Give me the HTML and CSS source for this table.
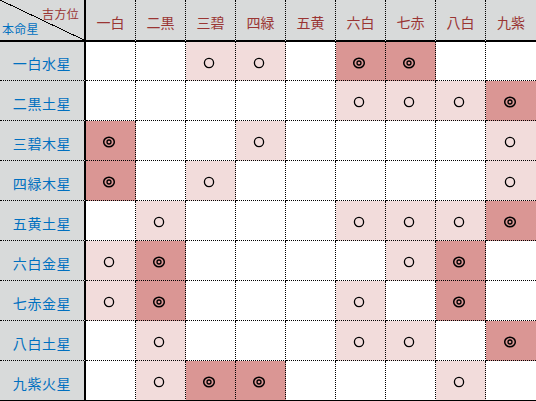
FILE: index.html
```html
<!DOCTYPE html>
<html lang="ja">
<head>
<meta charset="utf-8">
<title>吉方位表</title>
<link rel="stylesheet" href="styles.css">
</head>
<body>
<svg width="0" height="0" class="defs">
  <defs>
    <symbol id="maru" viewBox="0 0 14 14">
      <ellipse cx="7" cy="7" rx="4.6" ry="4.7" fill="none" stroke="#000" stroke-width="1.3"/>
    </symbol>
    <symbol id="nijumaru" viewBox="0 0 14 14">
      <ellipse cx="7" cy="7" rx="5.3" ry="4.7" fill="none" stroke="#000" stroke-width="1.5"/>
      <ellipse cx="7" cy="7" rx="2" ry="2" fill="none" stroke="#000" stroke-width="1.3"/>
    </symbol>
  </defs>
</svg>
<div class="grid">
  <div class="corner">
    <svg class="diag" viewBox="0 0 84 40" preserveAspectRatio="none"><line x1="0" y1="0" x2="84" y2="40" stroke="#000" stroke-width="1" shape-rendering="crispEdges"/></svg>
    <span class="corner-top">吉方位</span>
    <span class="corner-bottom">本命星</span>
  </div>
  <div class="col-head">一白</div>
  <div class="col-head">二黒</div>
  <div class="col-head">三碧</div>
  <div class="col-head">四緑</div>
  <div class="col-head">五黄</div>
  <div class="col-head">六白</div>
  <div class="col-head">七赤</div>
  <div class="col-head">八白</div>
  <div class="col-head end">九紫</div>

  <div class="row-head">一白水星</div>
  <div class="cell"></div>
  <div class="cell"></div>
  <div class="cell light"><svg class="mark"><use href="#maru"/></svg></div>
  <div class="cell light"><svg class="mark"><use href="#maru"/></svg></div>
  <div class="cell"></div>
  <div class="cell dark"><svg class="mark"><use href="#nijumaru"/></svg></div>
  <div class="cell dark"><svg class="mark"><use href="#nijumaru"/></svg></div>
  <div class="cell"></div>
  <div class="cell end"></div>

  <div class="row-head">二黒土星</div>
  <div class="cell"></div>
  <div class="cell"></div>
  <div class="cell"></div>
  <div class="cell"></div>
  <div class="cell"></div>
  <div class="cell light"><svg class="mark"><use href="#maru"/></svg></div>
  <div class="cell light"><svg class="mark"><use href="#maru"/></svg></div>
  <div class="cell light"><svg class="mark"><use href="#maru"/></svg></div>
  <div class="cell dark end"><svg class="mark"><use href="#nijumaru"/></svg></div>

  <div class="row-head">三碧木星</div>
  <div class="cell dark"><svg class="mark"><use href="#nijumaru"/></svg></div>
  <div class="cell"></div>
  <div class="cell"></div>
  <div class="cell light"><svg class="mark"><use href="#maru"/></svg></div>
  <div class="cell"></div>
  <div class="cell"></div>
  <div class="cell"></div>
  <div class="cell"></div>
  <div class="cell light end"><svg class="mark"><use href="#maru"/></svg></div>

  <div class="row-head">四緑木星</div>
  <div class="cell dark"><svg class="mark"><use href="#nijumaru"/></svg></div>
  <div class="cell"></div>
  <div class="cell light"><svg class="mark"><use href="#maru"/></svg></div>
  <div class="cell"></div>
  <div class="cell"></div>
  <div class="cell"></div>
  <div class="cell"></div>
  <div class="cell"></div>
  <div class="cell light end"><svg class="mark"><use href="#maru"/></svg></div>

  <div class="row-head">五黄土星</div>
  <div class="cell"></div>
  <div class="cell light"><svg class="mark"><use href="#maru"/></svg></div>
  <div class="cell"></div>
  <div class="cell"></div>
  <div class="cell"></div>
  <div class="cell light"><svg class="mark"><use href="#maru"/></svg></div>
  <div class="cell light"><svg class="mark"><use href="#maru"/></svg></div>
  <div class="cell light"><svg class="mark"><use href="#maru"/></svg></div>
  <div class="cell dark end"><svg class="mark"><use href="#nijumaru"/></svg></div>

  <div class="row-head">六白金星</div>
  <div class="cell light"><svg class="mark"><use href="#maru"/></svg></div>
  <div class="cell dark"><svg class="mark"><use href="#nijumaru"/></svg></div>
  <div class="cell"></div>
  <div class="cell"></div>
  <div class="cell"></div>
  <div class="cell"></div>
  <div class="cell light"><svg class="mark"><use href="#maru"/></svg></div>
  <div class="cell dark"><svg class="mark"><use href="#nijumaru"/></svg></div>
  <div class="cell end"></div>

  <div class="row-head">七赤金星</div>
  <div class="cell light"><svg class="mark"><use href="#maru"/></svg></div>
  <div class="cell dark"><svg class="mark"><use href="#nijumaru"/></svg></div>
  <div class="cell"></div>
  <div class="cell"></div>
  <div class="cell"></div>
  <div class="cell light"><svg class="mark"><use href="#maru"/></svg></div>
  <div class="cell"></div>
  <div class="cell dark"><svg class="mark"><use href="#nijumaru"/></svg></div>
  <div class="cell end"></div>

  <div class="row-head">八白土星</div>
  <div class="cell"></div>
  <div class="cell light"><svg class="mark"><use href="#maru"/></svg></div>
  <div class="cell"></div>
  <div class="cell"></div>
  <div class="cell"></div>
  <div class="cell light"><svg class="mark"><use href="#maru"/></svg></div>
  <div class="cell light"><svg class="mark"><use href="#maru"/></svg></div>
  <div class="cell"></div>
  <div class="cell dark end"><svg class="mark"><use href="#nijumaru"/></svg></div>

  <div class="row-head last">九紫火星</div>
  <div class="cell last"></div>
  <div class="cell light last"><svg class="mark"><use href="#maru"/></svg></div>
  <div class="cell dark last"><svg class="mark"><use href="#nijumaru"/></svg></div>
  <div class="cell dark last"><svg class="mark"><use href="#nijumaru"/></svg></div>
  <div class="cell last"></div>
  <div class="cell last"></div>
  <div class="cell last"></div>
  <div class="cell light last"><svg class="mark"><use href="#maru"/></svg></div>
  <div class="cell last end"></div>
</div>
</body>
</html>
```

FILE: styles.css
```css
html, body {
  margin: 0;
  padding: 0;
  background: #ffffff;
}

.defs {
  position: absolute;
  width: 0;
  height: 0;
  overflow: hidden;
}

.grid {
  display: grid;
  grid-template-columns: 86px repeat(9, 50px);
  grid-template-rows: 42px 39px repeat(8, 40px);
  width: 536px;
  font-family: "Noto Sans CJK JP", "Noto Sans", sans-serif;
}

.grid > div {
  box-sizing: border-box;
}

.corner {
  position: relative;
  background: #d8dada;
  border-right: 2px solid #000;
  border-bottom: 2px solid #000;
  display: flex;
  flex-direction: column;
  justify-content: space-between;
  font-size: 12px;
  line-height: 12px;
  padding: 8px 5px 5px 2px;
}

.diag {
  position: absolute;
  left: 0;
  top: 0;
  width: 84px;
  height: 40px;
}

.corner-top {
  align-self: flex-end;
  color: #9a3533;
  letter-spacing: 0.3px;
}

.corner-bottom {
  align-self: flex-start;
  color: #0070c0;
  letter-spacing: 0.3px;
}

.col-head {
  background: #d8dada;
  color: #9a3533;
  border-right: 1px dotted #000;
  border-bottom: 2px solid #000;
  display: flex;
  align-items: center;
  justify-content: center;
  font-size: 14px;
  padding-top: 3px;
}

.row-head {
  background: #d8dada;
  color: #0070c0;
  border-right: 2px solid #000;
  border-bottom: 1px dotted #000;
  display: flex;
  align-items: center;
  justify-content: center;
  font-size: 14px;
  letter-spacing: 0.6px;
  padding-top: 4px;
}

.cell {
  background: #ffffff;
  border-right: 1px dotted #000;
  border-bottom: 1px dotted #000;
  display: flex;
  align-items: center;
  justify-content: center;
  padding: 3px 3px 0 0;
}

.cell.light {
  background: #f2dcdb;
}

.cell.dark {
  background: #da9694;
}

.end {
  border-right: none !important;
}

.last {
  border-bottom: 1px solid #000 !important;
}

.mark {
  width: 14px;
  height: 14px;
  display: block;
}
```
